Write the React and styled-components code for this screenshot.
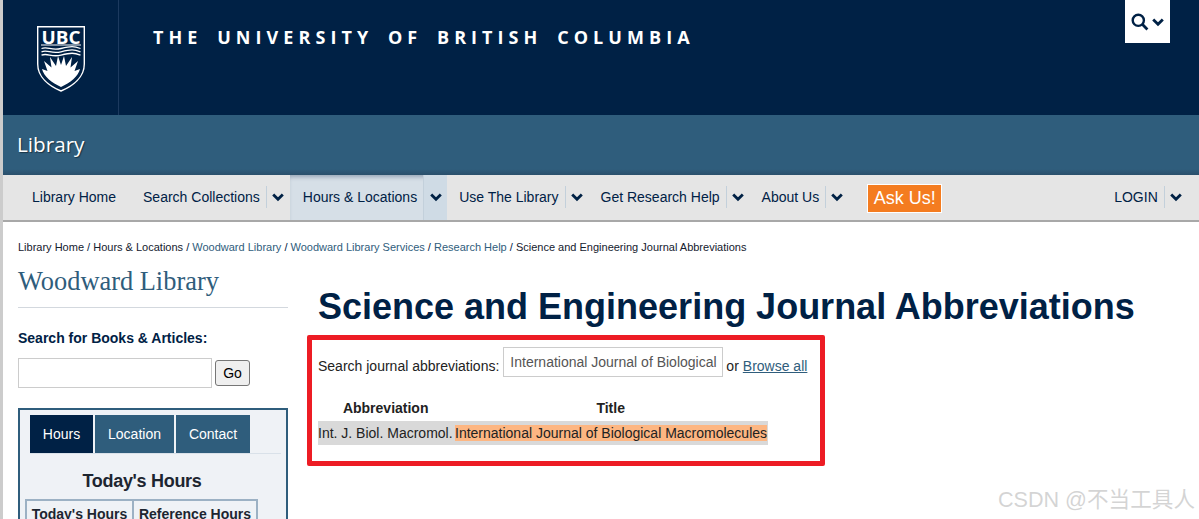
import React from 'react';
import styled, { createGlobalStyle } from 'styled-components';

const GlobalStyle = createGlobalStyle`
  html, body {
    margin: 0;
    padding: 0;
    background: #fff;
    overflow: hidden;
  }
  * { box-sizing: border-box; }
`;

const Page = styled.div`
  position: relative;
  width: 1199px;
  height: 519px;
  overflow: hidden;
  border-left: 3px solid #cccccc;
  font-family: "Liberation Sans", Arial, sans-serif;
  color: #002145;
`;

const Masthead = styled.header`
  height: 115px;
  background: #002145;
  display: flex;
  align-items: flex-start;
`;

const LogoCell = styled.div`
  width: 116px;
  height: 115px;
  border-right: 1px solid #1c3a5f;
  display: flex;
  justify-content: center;
  padding-top: 26px;
  padding-left: 1px;
`;

const UniversityName = styled.div`
  flex: 1;
  padding: 26px 0 0 34px;
  font-family: "Open Sans", sans-serif;
  font-size: 18px;
  line-height: 22px;
  font-weight: 700;
  letter-spacing: 5.06px;
  word-spacing: 5px;
  color: #fff;
  white-space: nowrap;
`;

const SearchToggle = styled.div`
  width: 45px;
  height: 43px;
  margin-right: 29px;
  background: #fff;
  display: flex;
  align-items: center;
  justify-content: center;
  gap: 3px;
`;

const UnitBar = styled.div`
  height: 60px;
  background: linear-gradient(#2f5d7c 0, #2f5d7c 54px, #2a4f6b 60px);
  padding: 16px 0 0 14px;
  font-family: "Open Sans", sans-serif;
  font-size: 20.7px;
  line-height: 26px;
  color: #fff;
  text-shadow: 1px 1px 1px rgba(0, 0, 0, 0.45);
`;

const NavBar = styled.nav`
  height: 47px;
  background: #e5e5e5;
  border-bottom: 2px solid #a8a8a8;
  display: flex;
  align-items: flex-start;
  padding-left: 15px;
  font-size: 14px;
`;

const NavItem = styled.div`
  display: flex;
  align-items: center;
  height: 45px;
  padding-bottom: 1px;
  margin-left: ${p => p.$left || 0}px;
  ${p => p.$active && `
    background: #d6dfe7;
    box-shadow: inset 0 4px 4px -2px rgba(0, 33, 69, 0.3);
  `}
`;

const NavLabel = styled.span`
  color: #002145;
  white-space: nowrap;
  padding-right: 6px;
  padding-left: ${p => p.$pad || 0}px;
`;

const Caret = styled.span`
  height: 22px;
  width: 23px;
  border-left: 1px solid #c3d0db;
  display: flex;
  align-items: center;
  justify-content: center;
  ${p => p.$active && `
    align-self: stretch;
    width: 24px;
    height: auto;
    margin-bottom: -1px;
    padding-bottom: 1px;
    background: #cfdbe5;
  `}
`;

const AskUs = styled.div`
  width: 75px;
  height: 29px;
  margin: 9px 172px 0 19px;
  border: 1px solid #fff;
  background: #f47c20;
  color: #fff;
  font-size: 18px;
  line-height: 27px;
  text-align: center;
`;

const Breadcrumbs = styled.div`
  padding: 19px 0 0 15px;
  height: 38px;
  font-size: 11px;
  line-height: 13px;
  color: #002145;
  white-space: nowrap;
`;

const Crumb = styled.span`
  color: ${p => (p.$link ? '#2f5d7c' : '#14202e')};
`;

const Columns = styled.div`
  display: flex;
  padding-left: 15px;
`;

const Sidebar = styled.aside`
  width: 270px;
  flex-shrink: 0;
`;

const SideTitle = styled.h2`
  margin: 0;
  padding: 5px 0 0;
  height: 48px;
  border-bottom: 1px solid #d3d8de;
  font-family: "Liberation Serif", serif;
  font-weight: 400;
  font-size: 26.4px;
  line-height: 33px;
  color: #2f5d7c;
`;

const SearchLabel = styled.div`
  margin-top: 22px;
  font-size: 14px;
  line-height: 17px;
  font-weight: 700;
  color: #002145;
`;

const SearchRow = styled.div`
  display: flex;
  align-items: center;
  gap: 3px;
  margin-top: 11px;
`;

const SearchInput = styled.div`
  width: 194px;
  height: 30px;
  border: 1px solid #ccc;
  background: #fff;
`;

const GoButton = styled.div`
  width: 35px;
  height: 26px;
  border: 1px solid #767676;
  border-radius: 3px;
  background: #efefef;
  color: #000;
  font-size: 14px;
  line-height: 24px;
  text-align: center;
`;

const HoursBox = styled.div`
  margin-top: 20px;
  height: 140px;
  border: 2px solid #2f5d7c;
  border-bottom: 0;
  background: #eff2f6;
  padding: 5px 0 0 7px;
`;

const Tabs = styled.div`
  display: flex;
  gap: 2px;
  margin-left: 3px;
  margin-right: 5px;
  border-bottom: 1px solid #d9e1e9;
`;

const Tab = styled.div`
  width: ${p => p.$w}px;
  height: 38px;
  background: ${p => (p.$active ? '#002145' : '#2f5d7c')};
  color: #fff;
  font-size: 14px;
  line-height: 38px;
  text-align: center;
`;

const HoursTitle = styled.div`
  margin: 16px 0 0 -7px;
  width: 244px;
  text-align: center;
  font-size: 18px;
  line-height: 22px;
  font-weight: 700;
  color: #1d2530;
  letter-spacing: -0.3px;
`;

const HoursTable = styled.div`
  display: flex;
  width: 233px;
  margin-top: 7px;
  margin-left: -2px;
  border: 2px solid #9cb1c4;
  border-bottom: 0;
`;

const HoursHead = styled.div`
  width: ${p => p.$w}px;
  padding-top: 5px;
  border-left: ${p => (p.$split ? '2px solid #9cb1c4' : '0')};
  font-size: 14px;
  line-height: 17px;
  font-weight: 700;
  color: #1d2530;
  text-align: center;
  white-space: nowrap;
`;

const Main = styled.main`
  padding-left: 30px;
`;

const PageTitle = styled.h1`
  margin: 0;
  padding-top: 25px;
  font-size: 36px;
  line-height: 44px;
  font-weight: 700;
  color: #002145;
  white-space: nowrap;
`;

const SearchLine = styled.div`
  display: flex;
  align-items: flex-start;
  margin-top: 18px;
  font-size: 14px;
  line-height: 38px;
  color: #222;
  white-space: nowrap;
`;

const JournalInput = styled.div`
  width: 220px;
  height: 30px;
  margin: 0 3px 0 4px;
  border: 1px solid #ccc;
  padding: 0 6px;
  font-size: 14px;
  line-height: 28px;
  color: #555;
  overflow: hidden;
`;

const BrowseLink = styled.span`
  margin-left: 4px;
  color: #2f5d7c;
  text-decoration: underline;
`;

const ResultTable = styled.div`
  width: 450px;
  margin-top: 15px;
  font-size: 14px;
`;

const ResultHead = styled.div`
  display: flex;
  height: 21px;
  font-weight: 700;
  line-height: 17px;
  color: #222;
  text-align: center;
`;

const HeadCell = styled.div`
  width: ${p => p.$w}px;
`;

const ResultRow = styled.div`
  display: flex;
  align-items: center;
  height: 24px;
  background: #d9d9d9;
  white-space: nowrap;
  color: #222;
`;

const Abbrev = styled.span`
  width: 137px;
  flex-shrink: 0;
`;

const Highlight = styled.span`
  background: #fdb682;
  line-height: 16px;
  height: 16px;
`;

// annotation drawn over the screenshot
const RedFrame = styled.div`
  position: absolute;
  left: 304px;
  top: 335px;
  width: 518px;
  height: 131px;
  border: 5px solid #ed1c24;
  border-radius: 2px;
  pointer-events: none;
`;

const Watermark = styled.div`
  position: absolute;
  right: 4px;
  bottom: 7px;
  font-family: "Liberation Sans", "Noto Sans CJK SC", sans-serif;
  font-size: 21.6px;
  line-height: 24px;
  color: rgba(170, 170, 170, 0.5);
  white-space: nowrap;
`;

const Chevron = ({ size = 12, color = '#002145' }) => (
  <svg width={size} height={size} viewBox="0 0 12 12" fill="none">
    <path d="M1.2 3.4 6 8.2l4.8-4.8" stroke={color} strokeWidth="2.8" />
  </svg>
);

const SearchIcon = () => (
  <svg width="18" height="18" viewBox="0 0 18 18" fill="none">
    <circle cx="7.3" cy="7.3" r="5.6" stroke="#002145" strokeWidth="2.4" />
    <path d="M11.3 11.3 16.4 16.4" stroke="#002145" strokeWidth="2.8" />
  </svg>
);

const UbcLogo = () => (
  <svg width="48" height="66" viewBox="0 0 48 66">
    <path d="M0.7 0.7H47.3V38C47.3 51 36 60 24 65C12 60 0.7 51 0.7 38Z" fill="#002145" stroke="#fff" strokeWidth="1.4" />
    <text x="4.5" y="17.5" fontFamily="Open Sans, sans-serif" fontSize="18" fontWeight="700" fill="#fff" textLength="39" lengthAdjust="spacingAndGlyphs">UBC</text>
    <path d="M4 19H44" stroke="#fff" strokeWidth="1.2" />
    <path d="M4.5 22.5C11 20 14 25 24 22.5S37 20 43.5 22.5M4.5 25.8C11 23.3 14 28.3 24 25.8S37 23.3 43.5 25.8M4.5 29.1C11 26.6 14 31.6 24 29.1S37 26.6 43.5 29.1" stroke="#fff" strokeWidth="1.3" fill="none" />
    <path d="M24 61C15 57 6.5 50 5 43L10.5 45 7 35 14.5 41.5 13 31 19 40 21 30 24 39 27 30 29 40 35 31 33.5 41.5 41 35 37.5 45 43 43C41.5 50 33 57 24 61Z" fill="#fff" />
  </svg>
);

const navItems = [
  { label: 'Search Collections', left: 21 },
  { label: 'Hours & Locations', active: true, pad: 13, left: 1 },
  { label: 'Use The Library', left: 12 },
  { label: 'Get Research Help', left: 13 },
  { label: 'About Us', left: 13 },
];

export default function App() {
  return (
    <Page>
      <GlobalStyle />
      <Masthead>
        <LogoCell><UbcLogo /></LogoCell>
        <UniversityName>THE UNIVERSITY OF BRITISH COLUMBIA</UniversityName>
        <SearchToggle>
          <SearchIcon />
          <Chevron />
        </SearchToggle>
      </Masthead>
      <UnitBar>Library</UnitBar>
      <NavBar>
        <NavItem><NavLabel $pad={14}>Library Home</NavLabel></NavItem>
        {navItems.map(item => (
          <NavItem key={item.label} $left={item.left} $active={item.active}>
            <NavLabel $pad={item.pad}>{item.label}</NavLabel>
            <Caret $active={item.active}><Chevron /></Caret>
          </NavItem>
        ))}
        <AskUs>Ask Us!</AskUs>
        <NavItem>
          <NavLabel>LOGIN</NavLabel>
          <Caret><Chevron /></Caret>
        </NavItem>
      </NavBar>
      <Breadcrumbs>
        <Crumb>Library Home</Crumb> / <Crumb>Hours &amp; Locations</Crumb> / <Crumb $link>Woodward Library</Crumb> / <Crumb $link>Woodward Library Services</Crumb> / <Crumb $link>Research Help</Crumb> / <Crumb>Science and Engineering Journal Abbreviations</Crumb>
      </Breadcrumbs>
      <Columns>
        <Sidebar>
          <SideTitle>Woodward Library</SideTitle>
          <SearchLabel>Search for Books &amp; Articles:</SearchLabel>
          <SearchRow>
            <SearchInput />
            <GoButton>Go</GoButton>
          </SearchRow>
          <HoursBox>
            <Tabs>
              <Tab $active $w={63}>Hours</Tab>
              <Tab $w={79}>Location</Tab>
              <Tab $w={74}>Contact</Tab>
            </Tabs>
            <HoursTitle>Today's Hours</HoursTitle>
            <HoursTable>
              <HoursHead $w={105}>Today's Hours</HoursHead>
              <HoursHead $w={124} $split>Reference Hours</HoursHead>
            </HoursTable>
          </HoursBox>
        </Sidebar>
        <Main>
          <PageTitle>Science and Engineering Journal Abbreviations</PageTitle>
          <SearchLine>
            Search journal abbreviations:
            <JournalInput>International Journal of Biological</JournalInput>
            or <BrowseLink>Browse all</BrowseLink>
          </SearchLine>
          <ResultTable>
            <ResultHead>
              <HeadCell $w={136}>Abbreviation</HeadCell>
              <HeadCell $w={316}>Title</HeadCell>
            </ResultHead>
            <ResultRow>
              <Abbrev>Int. J. Biol. Macromol.</Abbrev>
              <Highlight>International Journal of Biological Macromolecules</Highlight>
            </ResultRow>
          </ResultTable>
        </Main>
      </Columns>
      <RedFrame />
      <Watermark>CSDN @不当工具人</Watermark>
    </Page>
  );
}
